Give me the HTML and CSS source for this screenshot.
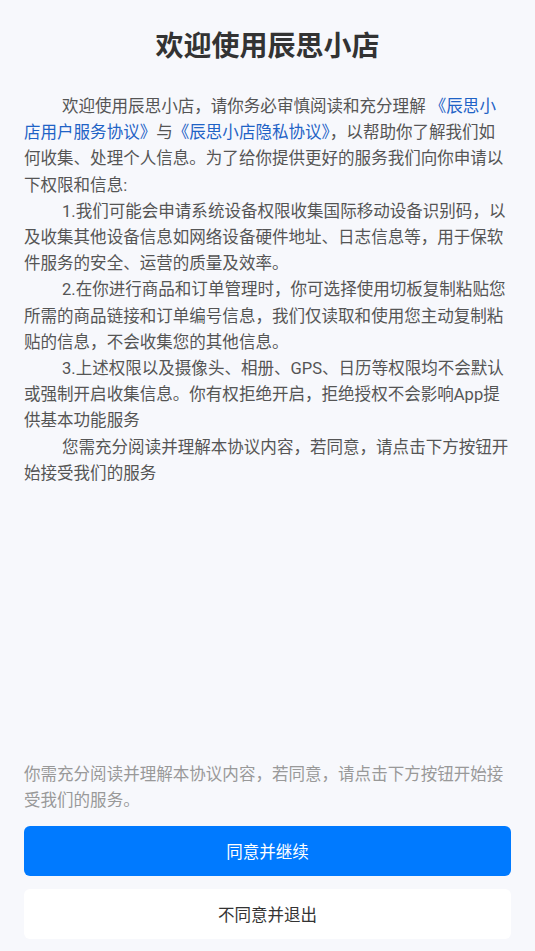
FILE: index.html
```html
<!DOCTYPE html>
<html lang="zh-CN">
<head>
  <meta charset="UTF-8">
  <meta name="viewport" content="width=device-width, initial-scale=1.0">
  <title>欢迎使用辰思小店</title>
  <link rel="stylesheet" href="styles.css">
</head>
<body>

  <div class="page">
    <div class="content">
      <h1 class="title">欢迎使用辰思小店</h1>
      <div class="agreement">
        <p>欢迎使用辰思小店，请你务必审慎阅读和充分理解 <a href="#">《辰思小店用户服务协议》</a>与<a href="#">《辰思小店隐私协议》</a>，以帮助你了解我们如何收集、处理个人信息。为了给你提供更好的服务我们向你申请以下权限和信息:</p>
        <p>1.我们可能会申请系统设备权限收集国际移动设备识别码，以及收集其他设备信息如网络设备硬件地址、日志信息等，用于保软件服务的安全、运营的质量及效率。</p>
        <p>2.在你进行商品和订单管理时，你可选择使用切板复制粘贴您所需的商品链接和订单编号信息，我们仅读取和使用您主动复制粘贴的信息，不会收集您的其他信息。</p>
        <p>3.上述权限以及摄像头、相册、GPS、日历等权限均不会默认或强制开启收集信息。你有权拒绝开启，拒绝授权不会影响App提供基本功能服务</p>
        <p>您需充分阅读并理解本协议内容，若同意，请点击下方按钮开始接受我们的服务</p>
      </div>
    </div>

    <div class="footer">
      <p class="tip">你需充分阅读并理解本协议内容，若同意，请点击下方按钮开始接受我们的服务。</p>
      <button class="btn btn-agree">同意并继续</button>
      <button class="btn btn-exit">不同意并退出</button>
    </div>
  </div>

</body>
</html>
```

FILE: styles.css
```css
html, body {
  height: 100%;
}

body {
  margin: 0;
  padding: 0;
  background-color: #f7f8fc;
  font-family: Roboto, "Noto Sans CJK SC", sans-serif;
  color: #555;
}

.page {
  display: flex;
  flex-direction: column;
  height: 100%;
  padding: 0 24px 12px;
  box-sizing: border-box;
}

.content {
  flex: 1;
}

.title {
  margin: 27px 0 0;
  font-size: 28px;
  line-height: 40px;
  font-weight: bold;
  color: #333;
  text-align: center;
}

.agreement {
  margin-top: 27px;
  font-size: 16.55px;
  line-height: 26.2px;
}

.agreement p {
  margin: 0;
  text-indent: 38px;
}

.agreement a {
  color: #1f63c6;
  text-decoration: none;
}

.footer {
  display: flex;
  flex-direction: column;
}

.tip {
  margin: 0 0 12px;
  font-size: 16.55px;
  line-height: 26px;
  color: #999;
}

.btn {
  height: 50px;
  border: none;
  border-radius: 6px;
  font-family: inherit;
  font-size: 16.55px;
  cursor: pointer;
}

.btn-agree {
  background-color: #007aff;
  color: #fff;
  margin-bottom: 13px;
}

.btn-exit {
  background-color: #fff;
  color: #333;
}
```
